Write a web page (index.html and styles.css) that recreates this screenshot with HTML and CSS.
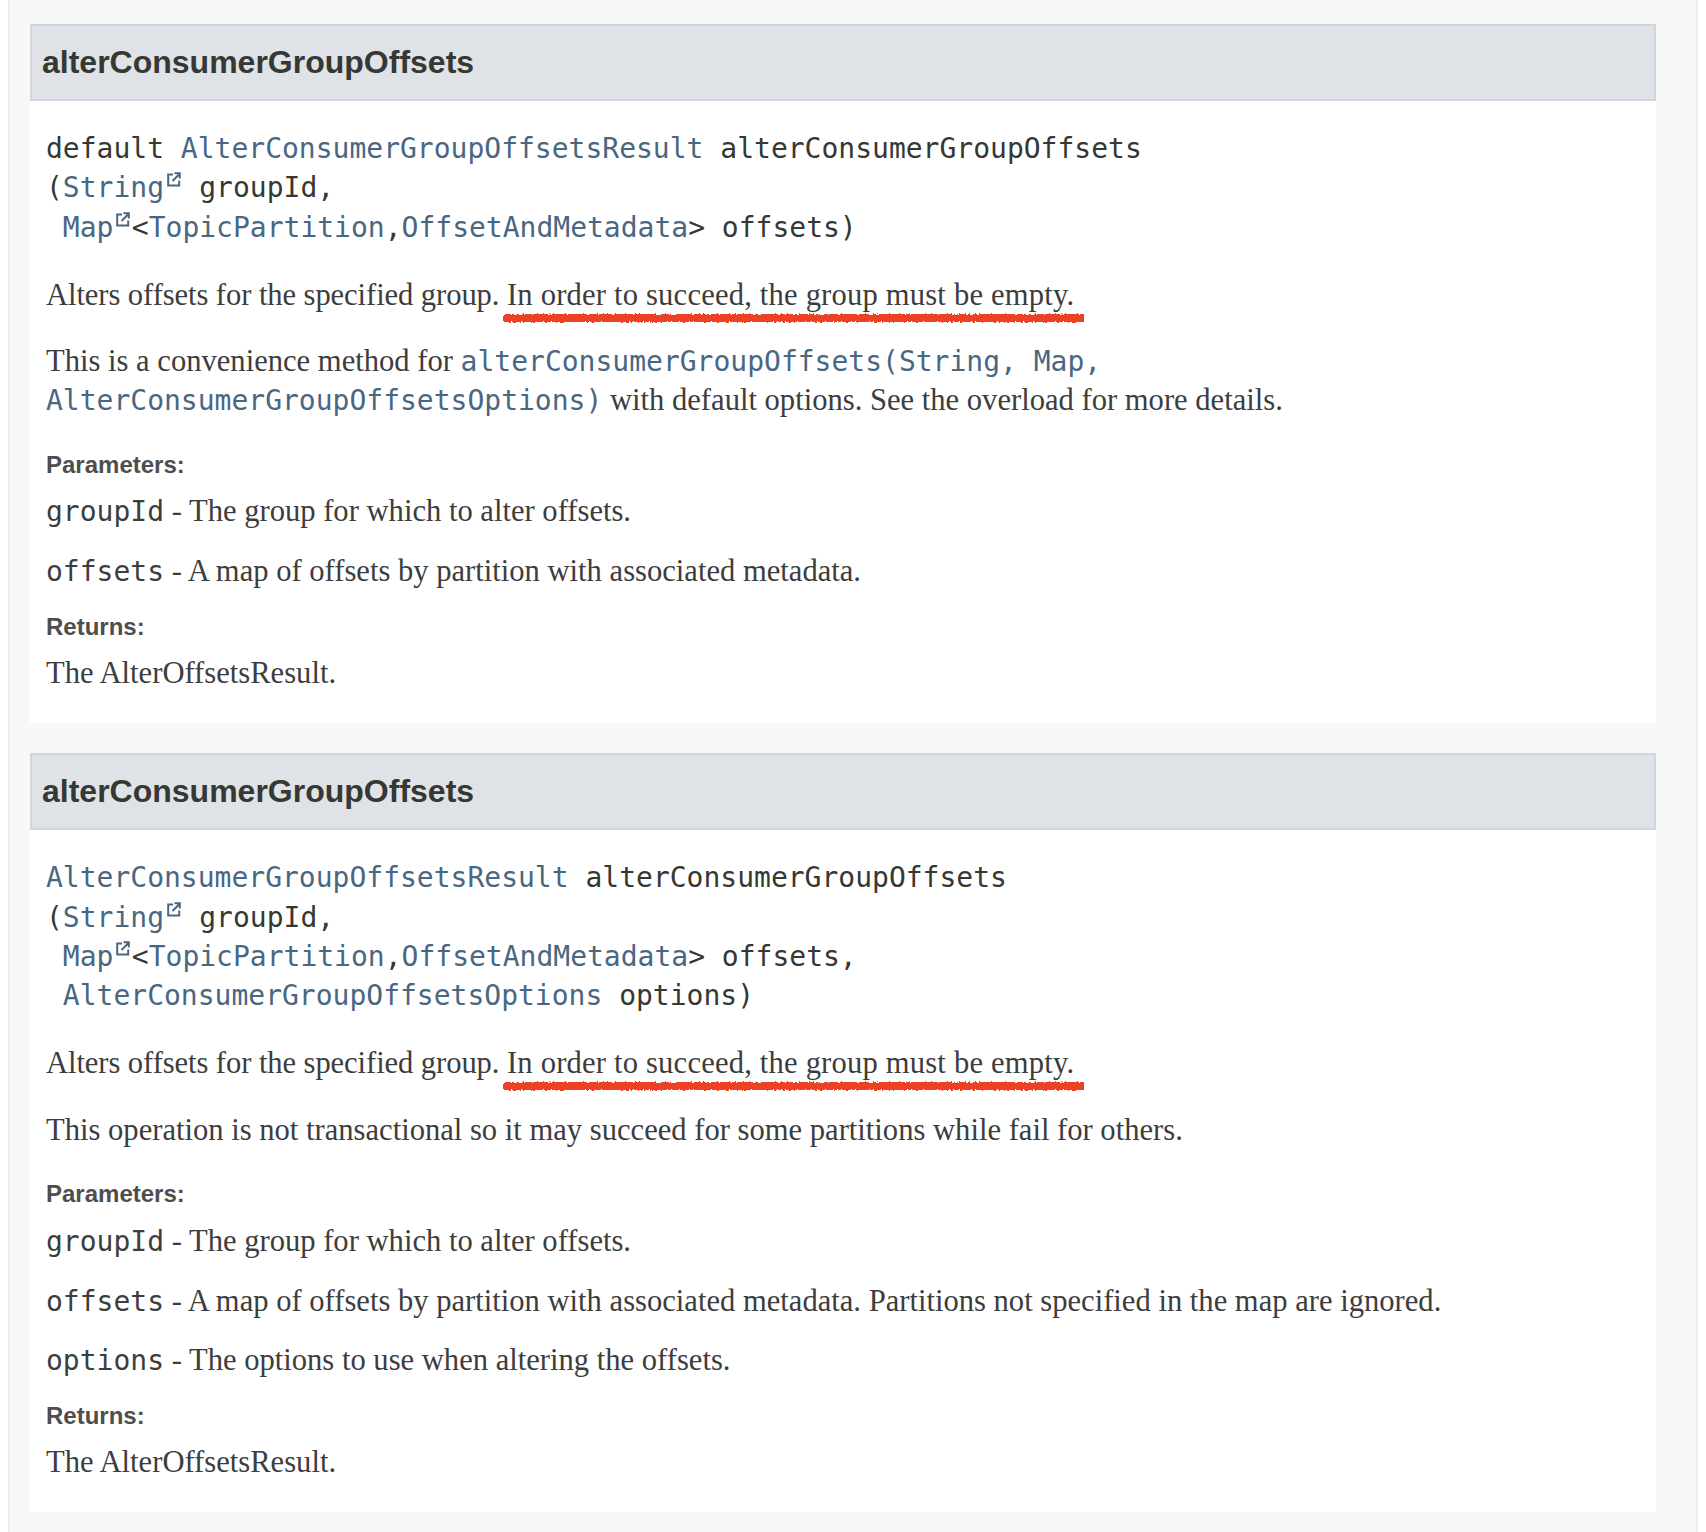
FILE: index.html
```html
<!DOCTYPE html>
<html lang="en">
<head>
<meta charset="utf-8">
<title>alterConsumerGroupOffsets</title>
<link rel="stylesheet" href="styles.css">
</head>
<body>
<svg class="defs" width="0" height="0" aria-hidden="true">
  <filter id="rough" x="-2%" y="-100%" width="104%" height="300%">
    <feTurbulence type="fractalNoise" baseFrequency="0.5" numOctaves="2" seed="4"/>
    <feDisplacementMap in="SourceGraphic" scale="4"/>
  </filter>
</svg>
<main class="page">
  <section class="method">
    <h3 class="method-title">alterConsumerGroupOffsets</h3>
    <div class="method-body">
      <div class="signature">default <a class="link">AlterConsumerGroupOffsetsResult</a> alterConsumerGroupOffsets<br>(<a class="link">String</a><svg class="ext" viewBox="0 0 14 15"><path d="M6 2.5H1.2v11h11V8.5"/><path d="M5.5 9l6.5-6.5M7.5 1.2h5.3v5.3"/></svg> groupId,<br> <a class="link">Map</a><svg class="ext" viewBox="0 0 14 15"><path d="M6 2.5H1.2v11h11V8.5"/><path d="M5.5 9l6.5-6.5M7.5 1.2h5.3v5.3"/></svg>&lt;<a class="link">TopicPartition</a>,<a class="link">OffsetAndMetadata</a>&gt; offsets)</div>
      <p class="text first">Alters offsets for the specified group. <span class="marked">In order to succeed, the group must be empty.<i class="scribble"></i></span></p>
      <p class="text second">This is a convenience method for <code class="link">alterConsumerGroupOffsets(String, Map, AlterConsumerGroupOffsetsOptions)</code> with default options. See the overload for more details.</p>
      <div class="label">Parameters:</div>
      <p class="param"><code>groupId</code> - The group for which to alter offsets.</p>
      <p class="param"><code>offsets</code> - A map of offsets by partition with associated metadata.</p>
      <div class="label label-returns">Returns:</div>
      <p class="param">The AlterOffsetsResult.</p>
    </div>
  </section>
  <section class="method">
    <h3 class="method-title">alterConsumerGroupOffsets</h3>
    <div class="method-body">
      <div class="signature"><a class="link">AlterConsumerGroupOffsetsResult</a> alterConsumerGroupOffsets<br>(<a class="link">String</a><svg class="ext" viewBox="0 0 14 15"><path d="M6 2.5H1.2v11h11V8.5"/><path d="M5.5 9l6.5-6.5M7.5 1.2h5.3v5.3"/></svg> groupId,<br> <a class="link">Map</a><svg class="ext" viewBox="0 0 14 15"><path d="M6 2.5H1.2v11h11V8.5"/><path d="M5.5 9l6.5-6.5M7.5 1.2h5.3v5.3"/></svg>&lt;<a class="link">TopicPartition</a>,<a class="link">OffsetAndMetadata</a>&gt; offsets,<br> <a class="link">AlterConsumerGroupOffsetsOptions</a> options)</div>
      <p class="text first">Alters offsets for the specified group. <span class="marked">In order to succeed, the group must be empty.<i class="scribble"></i></span></p>
      <p class="text second">This operation is not transactional so it may succeed for some partitions while fail for others.</p>
      <div class="label">Parameters:</div>
      <p class="param"><code>groupId</code> - The group for which to alter offsets.</p>
      <p class="param"><code>offsets</code> - A map of offsets by partition with associated metadata. Partitions not specified in the map are ignored.</p>
      <p class="param"><code>options</code> - The options to use when altering the offsets.</p>
      <div class="label label-returns">Returns:</div>
      <p class="param">The AlterOffsetsResult.</p>
    </div>
  </section>
</main>
</body>
</html>
```
FILE: styles.css
```css
html, body {
  margin: 0;
  padding: 0;
  background: #fff;
}
body {
  height: 1532px;
  overflow: hidden;
  padding: 0 8px;
}
.defs {
  position: absolute;
}
.page {
  box-sizing: border-box;
  height: 1532px;
  padding: 24px 40px 0 20px;
  background: #f8f8f8;
  border-left: 2px solid #eeeeee;
  border-right: 2px solid #eeeeee;
  font-family: "Liberation Serif", serif;
  color: #3d3d3d;
}
.method {
  background: #fff;
  margin-bottom: 30px;
}
.method-title {
  box-sizing: border-box;
  height: 77px;
  margin: 0;
  padding: 0 10px;
  display: flex;
  align-items: center;
  background: #dfe2e7;
  border: 2px solid #d0d7dc;
  font: bold 32px "Liberation Sans", sans-serif;
  color: #353833;
}
.method-body {
  padding: 28px 16px 30px;
}
.signature {
  font: 28px/39.3px "DejaVu Sans Mono", monospace;
  color: #353833;
  white-space: pre-wrap;
  width: 1200px;
}
.link {
  color: #4a6782;
}
code {
  font: 28px/39.3px "DejaVu Sans Mono", monospace;
}
.ext {
  width: 14px;
  height: 15px;
  margin: 0 1.4px 0 3px;
  vertical-align: 10px;
  fill: none;
  stroke: #4a6782;
  stroke-width: 2;
}
.text, .param {
  margin: 0;
  font-size: 30.6px;
  line-height: 39.3px;
}
.first {
  margin-top: 29px;
  letter-spacing: -0.08px;
}
.second {
  margin-top: 27px;
}
.param {
  margin-top: 20.6px;
}
.label {
  margin-top: 29px;
  margin-bottom: -8px;
  font: bold 24px/30px "Liberation Sans", sans-serif;
  color: #4e4e4e;
}
.label-returns {
  margin-top: 20.4px;
  margin-bottom: -8.6px;
}
.marked {
  position: relative;
  letter-spacing: 0.19px;
}
.scribble {
  position: absolute;
  left: -4px;
  right: -10px;
  bottom: -10px;
  height: 8px;
  background: #ee4023;
  filter: url(#rough);
}
```
